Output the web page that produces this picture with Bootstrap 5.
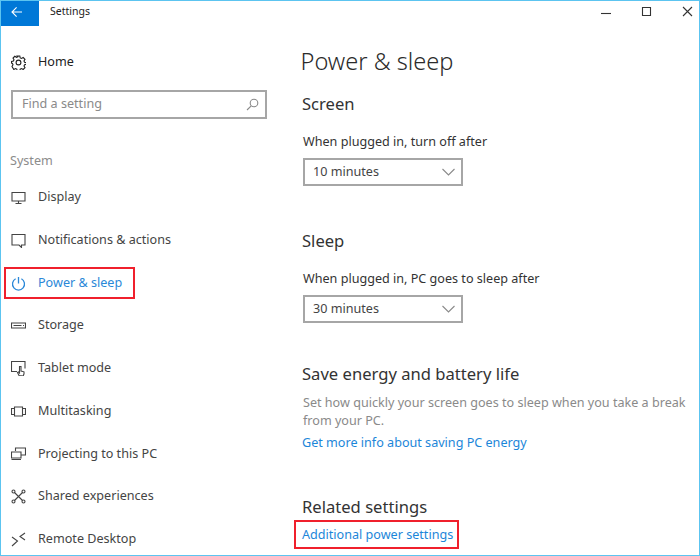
<!DOCTYPE html>
<html lang="en">

<head>
    <meta charset="UTF-8">
    <meta name="viewport" content="width=device-width, initial-scale=1">
    <title>Settings</title>
    <link href="https://cdn.jsdelivr.net/npm/bootstrap@5.3.3/dist/css/bootstrap.min.css" rel="stylesheet">
    <style>
        html, body { height: 100%; overflow: hidden; }
        body { font-family: "Noto Sans", "Open Sans", sans-serif; font-size: 12.6px; color: #333; background: #fff; }
        svg { fill: none; stroke: currentColor; stroke-width: 1.1; display: block; flex: none; }
        .win-frame { width: 700px; height: 556px; border: 1px solid #5cc4f0; }
        .win-bar { height: 25px; }
        .back-btn { width: 38px; height: 25px; background: #0078d7; color: #fff; padding: 0 6px 3px 0; }
        .win-title { font-size: 10.5px; margin-left: 11px; margin-top: -3px; color: #222; }
        .win-ctrls { gap: 30px; padding-right: 6px; margin-top: -4px; }
        .side-col { width: 290px; }
        .home-row { height: 22px; margin-top: 25px; padding-left: 10px; gap: 12px; color: #222; }
        .find-box { width: 256px; height: 29px; margin: 17px 0 0 10px; border: 2px solid #a6a6a6; padding: 0 6px 0 9px; color: #8a8a8a; }
        .side-head { margin: 33px 0 0 9px; height: 20px; color: #8c8c8c; }
        .side-list { margin-top: 4.500px; }
        .side-item { height: 42.7px; padding-left: 10px; gap: 12px; color: #444; }
        .side-item.is-on { color: #2b88d8; }
        .side-on-wrap { height: 32px; width: 131px; margin-left: 3px; padding-left: 5px; gap: 12px; border: 2px solid #f0202c; }
        .ico-bold { stroke-width: 1.300; }
        .main-col { padding-left: 10px; }
        .page-title { font-size: 23.6px; font-weight: 300; color: #2b2b2b; margin: 20px 0 0 -.5px; line-height: 30px; height: 30px; }
        .sec-head { font-size: 16.6px; font-weight: 400; line-height: 22px; margin: 0; color: #333; padding-left: 1px; }
        .sec-first { margin-top: 17px; }
        .sec-mid { margin-top: 44px; }
        .sec-save { margin-top: 40px; }
        .sec-related { margin-top: 44px; }
        .sec-label { line-height: 18px; margin: 18px 0 0; color: #333; padding-left: 2px; }
        .drop-box { width: 160px; height: 28px; margin: 7px 0 0 2px; border: 2px solid #a6a6a6; padding: 0 6px 0 8px; color: #444; }
        .drop-arrow { stroke: #8a8a8a; }
        .soft-text { color: #8a8a8a; line-height: 18px; padding-left: 2px; width: 395px; margin: 9px 0 0; }
        .more-link { line-height: 18px; margin: 4px 0 0; padding-left: 1px; }
        .blue-link { color: #1c86d9; text-decoration: none; }
        .red-frame { display: block; width: 165px; height: 29px; line-height: 25px; margin: 2px 0 0 -7px; border: 2px solid #f0202c; padding-left: 6px; white-space: nowrap; }
    </style>
</head>

<body>
    <div class="win-frame d-flex flex-column">
        <!-- Barra de titulo -->
        <div class="win-bar d-flex align-items-center justify-content-between">
            <div class="d-flex align-items-center">
                <div class="back-btn d-flex align-items-center justify-content-center">
                    <svg width="12" height="12" viewBox="0 0 12 12"><path d="M11 6H1.200M5.600 1.400 1 6l4.600 4.600"/></svg>
                </div>
                <span class="win-title">Settings</span>
            </div>
            <div class="win-ctrls d-flex align-items-center">
                <svg width="10" height="10" viewBox="0 0 10 10"><path d="M0 6.500h10"/></svg>
                <svg width="11" height="11" viewBox="0 0 11 11"><path d="M1.500 1.500h8v8h-8z"/></svg>
                <svg width="11" height="11" viewBox="0 0 11 11"><path d="M1 1l9 9M10 1l-9 9"/></svg>
            </div>
        </div>

        <div class="d-flex flex-grow-1">
            <!-- Menu lateral -->
            <div class="side-col">
                <div class="home-row d-flex align-items-center">
                    <svg width="15" height="15" viewBox="0 0 15 15"><circle cx="7.500" cy="7.500" r="2.400"/><path d="M6.200 1h2.600l.4 1.900 1.300.6 1.700-1 1.800 1.800-1 1.700.6 1.300 1.900.4v1.600l-1.900.4-.6 1.300 1 1.700-1.800 1.800-1.700-1-1.300.6-.4 1.900H6.200l-.4-1.900-1.300-.6-1.700 1L1 11.500l1-1.700-.6-1.300L.5 8.100V6.500l1.900-.4.600-1.300-1-1.700 1.800-1.800 1.700 1 1.300-.6z"/></svg>
                    <span>Home</span>
                </div>
                <div class="find-box d-flex align-items-center justify-content-between">
                    <span>Find a setting</span>
                    <svg width="13" height="13" viewBox="0 0 13 13"><circle cx="8" cy="5" r="3.800"/><path d="M5.200 7.800 1 12"/></svg>
                </div>
                <div class="side-head">System</div>
                <div class="side-list">
                    <div class="side-item d-flex align-items-center">
                        <svg width="15" height="15" viewBox="0 0 15 15"><path d="M1 2.500h13v8.500H1zM7.500 11v2.500M4.500 13.500h6"/></svg>
                        <span>Display</span>
                    </div>
                    <div class="side-item d-flex align-items-center">
                        <svg width="15" height="15" viewBox="0 0 15 15"><path d="M1 1.500h13v10.500h-3.500v2.500L8 12H1z"/></svg>
                        <span>Notifications &amp; actions</span>
                    </div>
                    <div class="side-item is-on d-flex align-items-center p-0">
                        <div class="side-on-wrap d-flex align-items-center">
                            <svg class="ico-bold" width="15" height="15" viewBox="0 0 15 15"><path d="M4.600 2.800a6 6 0 1 0 5.800 0M7.500 1v6.500"/></svg>
                            <span>Power &amp; sleep</span>
                        </div>
                    </div>
                    <div class="side-item d-flex align-items-center">
                        <svg width="15" height="15" viewBox="0 0 15 15"><path d="M.5 5h14v5H.5zM2.500 7.500h8M12 7.500h1"/></svg>
                        <span>Storage</span>
                    </div>
                    <div class="side-item d-flex align-items-center">
                        <svg width="15" height="15" viewBox="0 0 15 15"><path d="M6 10.500H.5v-10h13.500v7"/><path d="M8 14.500 6.500 11.500l1-.5 1 1V5.500h1.500v4.500l3 .8v2l-.8 2.200z"/></svg>
                        <span>Tablet mode</span>
                    </div>
                    <div class="side-item d-flex align-items-center">
                        <svg width="15" height="15" viewBox="0 0 15 15"><path d="M3.500 3h8v9h-8zM3.500 4.500H.5v6h3M11.500 4.500h3v6h-3"/></svg>
                        <span>Multitasking</span>
                    </div>
                    <div class="side-item d-flex align-items-center">
                        <svg width="15" height="15" viewBox="0 0 15 15"><path d="M4.500 5V2h10v7h-4M.5 6h9.500v6H.5zM.5 13.500h9.500"/></svg>
                        <span>Projecting to this PC</span>
                    </div>
                    <div class="side-item d-flex align-items-center">
                        <svg width="15" height="15" viewBox="0 0 15 15"><circle cx="2.500" cy="2.500" r="1.500"/><circle cx="12.500" cy="2.500" r="1.500"/><circle cx="2.500" cy="12.500" r="1.500"/><circle cx="12.500" cy="12.500" r="1.500"/><path d="M3.500 3.500l8 8M11.500 3.500l-8 8"/></svg>
                        <span>Shared experiences</span>
                    </div>
                    <div class="side-item d-flex align-items-center">
                        <svg width="15" height="15" viewBox="0 0 15 15"><path d="M1 5l5.500 4L1 14M14 1 9 4.500l5 3.500"/></svg>
                        <span>Remote Desktop</span>
                    </div>
                </div>
            </div>

            <!-- Contenido -->
            <div class="main-col flex-grow-1">
                <h1 class="page-title">Power &amp; sleep</h1>

                <h2 class="sec-head sec-first">Screen</h2>
                <p class="sec-label">When plugged in, turn off after</p>
                <div class="drop-box d-flex align-items-center justify-content-between">
                    <span>10 minutes</span>
                    <svg class="drop-arrow" width="13" height="8" viewBox="0 0 13 8"><path d="M.5 1l6 6 6-6"/></svg>
                </div>

                <h2 class="sec-head sec-mid">Sleep</h2>
                <p class="sec-label">When plugged in, PC goes to sleep after</p>
                <div class="drop-box d-flex align-items-center justify-content-between">
                    <span>30 minutes</span>
                    <svg class="drop-arrow" width="13" height="8" viewBox="0 0 13 8"><path d="M.5 1l6 6 6-6"/></svg>
                </div>

                <h2 class="sec-head sec-save">Save energy and battery life</h2>
                <p class="soft-text">Set how quickly your screen goes to sleep when you take a break from your PC.</p>
                <p class="more-link"><a class="blue-link" href="#">Get more info about saving PC energy</a></p>

                <h2 class="sec-head sec-related">Related settings</h2>
                <a class="blue-link red-frame" href="#">Additional power settings</a>
            </div>
        </div>
    </div>

    <script src="https://cdn.jsdelivr.net/npm/bootstrap@5.3.3/dist/js/bootstrap.bundle.min.js"></script>
</body>

</html>
